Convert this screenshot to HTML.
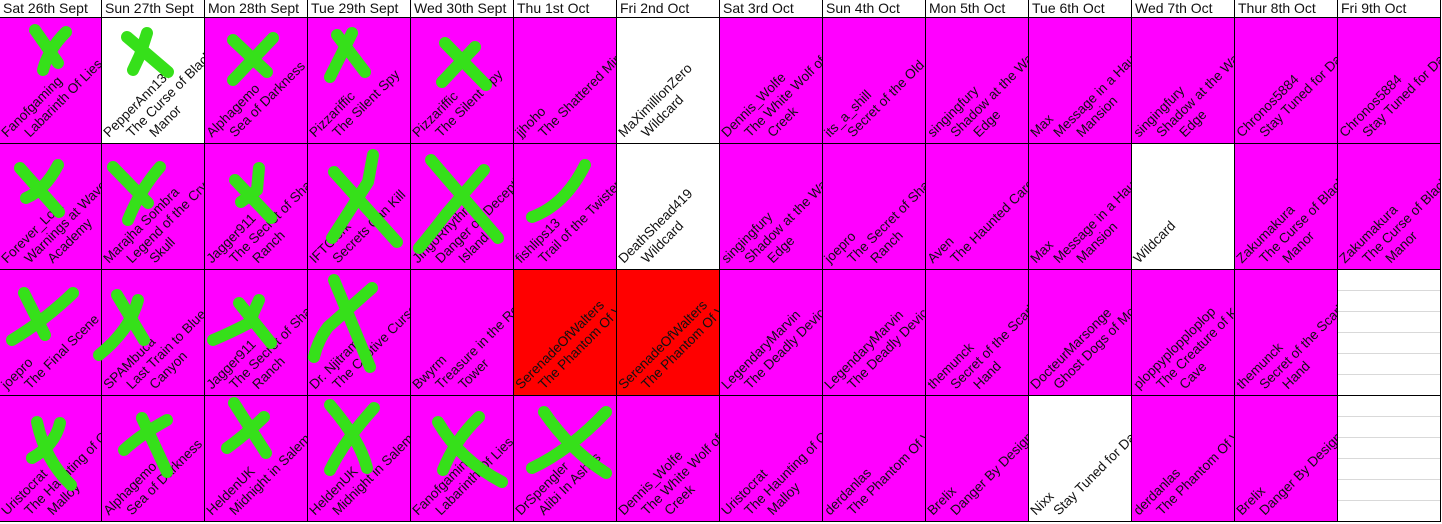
<!DOCTYPE html>
<html><head><meta charset="utf-8"><style>
*{margin:0;padding:0;box-sizing:border-box}
body{width:1442px;height:524px;background:#fff;position:relative;overflow:hidden;font-family:"Liberation Sans",Arial,sans-serif;color:#111}
.c{position:absolute;height:126px;width:103px;border-right:1px solid #000;border-bottom:1px solid #000;overflow:hidden;background:#f0f}
.h{position:absolute;top:0;height:18px;width:103px;border-right:1px solid #000;border-bottom:1px solid #000;font-size:14px;line-height:17px;padding-left:3px;white-space:nowrap;overflow:hidden;background:#fff}
.w{background:#fff}.r{background:#f00}
.g{background:#fff repeating-linear-gradient(to bottom,transparent 0,transparent 20px,#d9d9d9 20px,#d9d9d9 21px)}
.c span{position:absolute;bottom:3px;white-space:nowrap;font-size:13.6px;line-height:15px;transform-origin:0 100%;transform:rotate(-45deg)}
.c span:nth-child(1){left:9px}.c span:nth-child(2){left:32px}.c span:nth-child(3){left:55px}
svg{position:absolute;left:0;top:0}
</style></head><body>
<div class="h" style="left:0;width:102px">Sat 26th Sept</div>
<div class="h" style="left:102px">Sun 27th Sept</div>
<div class="h" style="left:205px">Mon 28th Sept</div>
<div class="h" style="left:308px">Tue 29th Sept</div>
<div class="h" style="left:411px">Wed 30th Sept</div>
<div class="h" style="left:514px">Thu 1st Oct</div>
<div class="h" style="left:617px">Fri 2nd Oct</div>
<div class="h" style="left:720px">Sat 3rd Oct</div>
<div class="h" style="left:823px">Sun 4th Oct</div>
<div class="h" style="left:926px">Mon 5th Oct</div>
<div class="h" style="left:1029px">Tue 6th Oct</div>
<div class="h" style="left:1132px">Wed 7th Oct</div>
<div class="h" style="left:1235px">Thur 8th Oct</div>
<div class="h" style="left:1338px">Fri 9th Oct</div>

<!-- row 1 -->
<div class="c" style="left:0;width:102px;top:18px"><span>Fanofgaming</span><span>Labarinth Of Lies</span></div>
<div class="c w" style="left:102px;top:18px"><span>PepperAnn131</span><span>The Curse of Black</span><span>Manor</span></div>
<div class="c" style="left:205px;top:18px"><span>Alphagemo</span><span>Sea of Darkness</span></div>
<div class="c" style="left:308px;top:18px"><span>Pizzariffic</span><span>The Silent Spy</span></div>
<div class="c" style="left:411px;top:18px"><span>Pizzariffic</span><span>The Silent Spy</span></div>
<div class="c" style="left:514px;top:18px"><span>jjhoho</span><span>The Shattered Mirror</span></div>
<div class="c w" style="left:617px;top:18px"><span>MaXimillionZero</span><span>Wildcard</span></div>
<div class="c" style="left:720px;top:18px"><span>Dennis_Wolfe</span><span>The White Wolf of</span><span>Creek</span></div>
<div class="c" style="left:823px;top:18px"><span>its_a_shill</span><span>Secret of the Old</span></div>
<div class="c" style="left:926px;top:18px"><span>singingfury</span><span>Shadow at the Water's</span><span>Edge</span></div>
<div class="c" style="left:1029px;top:18px"><span>Max</span><span>Message in a Haunted</span><span>Mansion</span></div>
<div class="c" style="left:1132px;top:18px"><span>singingfury</span><span>Shadow at the Water's</span><span>Edge</span></div>
<div class="c" style="left:1235px;top:18px"><span>Chronos5884</span><span>Stay Tuned for Danger</span></div>
<div class="c" style="left:1338px;top:18px"><span>Chronos5884</span><span>Stay Tuned for Danger</span></div>

<!-- row 2 -->
<div class="c" style="left:0;width:102px;top:144px"><span>Forever_Lola</span><span>Warnings at Waverly</span><span>Academy</span></div>
<div class="c" style="left:102px;top:144px"><span>Marajha Sombra</span><span>Legend of the Crystal</span><span>Skull</span></div>
<div class="c" style="left:205px;top:144px"><span>Jagger911</span><span>The Secret of Shadow</span><span>Ranch</span></div>
<div class="c" style="left:308px;top:144px"><span>IFTClerk</span><span>Secrets Can Kill</span></div>
<div class="c" style="left:411px;top:144px"><span>JingoRhythm</span><span>Danger on Deception</span><span>Island</span></div>
<div class="c" style="left:514px;top:144px"><span>fishlips13</span><span>Trail of the Twister</span></div>
<div class="c w" style="left:617px;top:144px"><span>DeathShead419</span><span>Wildcard</span></div>
<div class="c" style="left:720px;top:144px"><span>singingfury</span><span>Shadow at the Water's</span><span>Edge</span></div>
<div class="c" style="left:823px;top:144px"><span>joepro</span><span>The Secret of Shadow</span><span>Ranch</span></div>
<div class="c" style="left:926px;top:144px"><span>Aven</span><span>The Haunted Carousel</span></div>
<div class="c" style="left:1029px;top:144px"><span>Max</span><span>Message in a Haunted</span><span>Mansion</span></div>
<div class="c w" style="left:1132px;top:144px"><span>Wildcard</span></div>
<div class="c" style="left:1235px;top:144px"><span>Zakumakura</span><span>The Curse of Black</span><span>Manor</span></div>
<div class="c" style="left:1338px;top:144px"><span>Zakumakura</span><span>The Curse of Black</span><span>Manor</span></div>

<!-- row 3 -->
<div class="c" style="left:0;width:102px;top:270px"><span>joepro</span><span>The Final Scene</span></div>
<div class="c" style="left:102px;top:270px"><span>SPAMbuca</span><span>Last Train to Blue</span><span>Canyon</span></div>
<div class="c" style="left:205px;top:270px"><span>Jagger911</span><span>The Secret of Shadow</span><span>Ranch</span></div>
<div class="c" style="left:308px;top:270px"><span>Dr. Njitram</span><span>The Captive Curse</span></div>
<div class="c" style="left:411px;top:270px"><span>Bwyrm</span><span>Treasure in the Royal</span><span>Tower</span></div>
<div class="c r" style="left:514px;top:270px"><span>SerenadeOfWalters</span><span>The Phantom Of Venice</span></div>
<div class="c r" style="left:617px;top:270px"><span>SerenadeOfWalters</span><span>The Phantom Of Venice</span></div>
<div class="c" style="left:720px;top:270px"><span>LegendaryMarvin</span><span>The Deadly Device</span></div>
<div class="c" style="left:823px;top:270px"><span>LegendaryMarvin</span><span>The Deadly Device</span></div>
<div class="c" style="left:926px;top:270px"><span>themunck</span><span>Secret of the Scarlet</span><span>Hand</span></div>
<div class="c" style="left:1029px;top:270px"><span>DocteurMarsonge</span><span>Ghost Dogs of Moon Lake</span></div>
<div class="c" style="left:1132px;top:270px"><span>ploppyplopploplop</span><span>The Creature of Kapu</span><span>Cave</span></div>
<div class="c" style="left:1235px;top:270px"><span>themunck</span><span>Secret of the Scarlet</span><span>Hand</span></div>
<div class="c g" style="left:1338px;top:270px"></div>

<!-- row 4 -->
<div class="c" style="left:0;width:102px;top:396px"><span>Uristocrat</span><span>The Haunting of Castle</span><span>Malloy</span></div>
<div class="c" style="left:102px;top:396px"><span>Alphagemo</span><span>Sea of Darkness</span></div>
<div class="c" style="left:205px;top:396px"><span>HeldenUK</span><span>Midnight in Salem</span></div>
<div class="c" style="left:308px;top:396px"><span>HeldenUK</span><span>Midnight in Salem</span></div>
<div class="c" style="left:411px;top:396px"><span>Fanofgaming</span><span>Labarinth Of Lies</span></div>
<div class="c" style="left:514px;top:396px"><span>DrSpengler</span><span>Alibi In Ashes</span></div>
<div class="c" style="left:617px;top:396px"><span>Dennis_Wolfe</span><span>The White Wolf of</span><span>Creek</span></div>
<div class="c" style="left:720px;top:396px"><span>Uristocrat</span><span>The Haunting of Castle</span><span>Malloy</span></div>
<div class="c" style="left:823px;top:396px"><span>derdanlas</span><span>The Phantom Of Venice</span></div>
<div class="c" style="left:926px;top:396px"><span>Brelix</span><span>Danger By Design</span></div>
<div class="c w" style="left:1029px;top:396px"><span>Nixx</span><span>Stay Tuned for Danger</span></div>
<div class="c" style="left:1132px;top:396px"><span>derdanlas</span><span>The Phantom Of Venice</span></div>
<div class="c" style="left:1235px;top:396px"><span>Brelix</span><span>Danger By Design</span></div>
<div class="c g" style="left:1338px;top:396px"></div>

<svg width="1442" height="524" viewBox="0 0 1442 524">
<g fill="none" stroke="#36e01a" stroke-width="12" stroke-linecap="round" stroke-linejoin="round">
<path d="M35 30 L58 63 M66 32 Q48 50 43 70"/>
<path d="M127 37 L168 72 M147 33 L140 55 L133 70"/>
<path d="M233 40 L267 72 M273 38 L233 80"/>
<path d="M337 35 L365 72 M352 33 L330 77"/>
<path d="M445 43 L486 85 M475 47 L442 82"/>
<path d="M20 168 L59 212 M58 165 Q45 190 26 198"/>
<path d="M113 167 L148 203 M160 167 Q140 190 128 220"/>
<path d="M235 180 L271 218 M259 168 L257 190 L241 202"/>
<path d="M334 172 L397 242 M373 155 L368 182 L332 238"/>
<path d="M431 160 L498 238 M484 170 L447 213 Q430 235 419 248"/>
<path d="M532 217 Q565 205 585 165"/>
<path d="M24 293 L45 335 M73 293 Q45 320 12 340"/>
<path d="M117 295 L144 340 M138 300 Q130 330 99 355"/>
<path d="M239 303 L271 343 M259 300 L249 323 Q230 333 213 340"/>
<path d="M334 280 L370 367 M372 288 L328 327 Q318 340 314 357"/>
<path d="M37 422 Q45 460 71 485 M60 423 Q55 445 32 458"/>
<path d="M142 418 L167 472 M167 420 Q140 435 124 450"/>
<path d="M234 403 L266 453 M264 417 Q245 435 227 448"/>
<path d="M330 405 Q360 440 367 468 M374 408 Q345 440 330 470"/>
<path d="M438 422 Q460 460 502 482 M479 417 Q455 440 443 470"/>
<path d="M544 412 Q570 450 606 473 M606 412 Q570 450 532 468"/>
</g></svg>
</body></html>
